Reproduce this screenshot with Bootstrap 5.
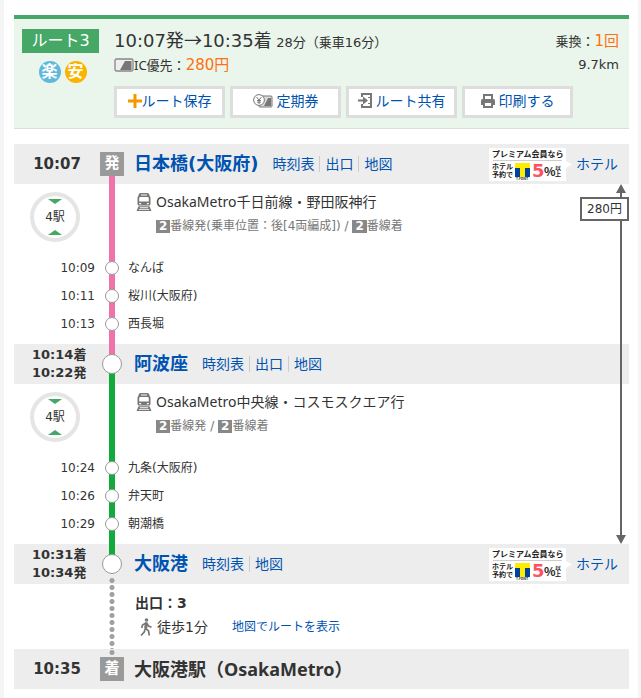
<!DOCTYPE html>
<html lang="ja">
<head>
<meta charset="utf-8">
<meta name="viewport" content="width=device-width, initial-scale=1">
<title>ルート3</title>
<link href="https://cdn.jsdelivr.net/npm/bootstrap@5.3.0/dist/css/bootstrap.min.css" rel="stylesheet">
<style>
body{background:#f5f5f5;color:#333;font-family:"DejaVu Sans","Noto Sans CJK JP",sans-serif;font-size:14px;line-height:20px}
a{color:#0053b0;text-decoration:none}
a:hover{text-decoration:underline}
svg{display:block;flex:none}
.page-sheet{background:#fff;margin:0 3px 0 4px;padding:15px 9px 9px 10px}
.alpha{font-family:"Noto Sans","Noto Sans CJK JP",sans-serif}
.cjk{font-family:"Noto Sans CJK JP",sans-serif}
.fs-12{font-size:12px}.fs-13{font-size:13px}.fs-15{font-size:15px}.fs-18{font-size:18px}
.accent{color:#ff7010}
.route-head{background:#eaf5eb;border-top:4px solid #45a866;border-bottom:1px solid #ddd;padding:10px 10px 10px 8px;margin-bottom:15px}
.route-side{width:77px;margin-right:15px}
.route-no{background:#45a866;color:#fff;font-size:16px;line-height:24px;font-weight:400;text-align:center;margin:0 0 8px}
.trait{width:22px;height:22px;border-radius:50%;color:#fff;font-weight:700;font-size:16px;line-height:21px;text-align:center}
.trait-easy{background:#5fb9dd}.trait-cheap{background:#fab400}
.fare-row{padding-top:2px}
.tool-list{gap:5px;margin-top:11px}
.tool-btn{width:111px;height:32px;padding:0 0 3px;border:3px solid #ddd;border-radius:0;background:#fff;color:#0053b0;font-size:14px;line-height:20px}
.tool-btn:hover{background:#f8f8f8;border-color:#ccc}
.stop-row{background:#ededed;height:40px}
.time-col{width:86px;flex:none}
.rail-col{width:24px;flex:none;align-self:stretch}
.time-main{font-size:15px;font-weight:700}
.time-pair{font-size:13px;font-weight:700;line-height:18px;padding-left:18px}
.stop-name{font-size:18px;line-height:26px;font-weight:700;margin:0 14px 0 10px}
.stop-links a+a{border-left:1px solid #ccc;margin-left:5px;padding-left:5px}
.hotel-link{gap:3px;margin-right:11px}
.end-mark{width:24px;height:24px;background:#999;color:#fff;font-size:15px;font-weight:700;line-height:23px;text-align:center}
.big-dot{width:20px;height:20px;border:1px solid #999;border-radius:50%;background:#fff}
.small-dot{width:14px;height:14px;border:1px solid #999;border-radius:50%;background:#fff}
.rail-start{background:linear-gradient(#ee73aa,#ee73aa) center bottom/6px 50% no-repeat}
.rail-change{background:linear-gradient(#ee73aa,#ee73aa) center top/6px 50% no-repeat,linear-gradient(#13aa3d,#13aa3d) center bottom/6px 50% no-repeat}
.rail-walk{background:linear-gradient(#13aa3d,#13aa3d) center top/6px 50% no-repeat,radial-gradient(circle,#a0a0a0 2px,transparent 3px) center bottom/6px 7px no-repeat}
.rail-arrive{background:radial-gradient(circle,#a0a0a0 2px,transparent 3px) center top/6px 7px no-repeat}
.leg-pink,.leg-green{padding-bottom:6px}
.leg-pink{background:linear-gradient(#ee73aa,#ee73aa) 95px 0/6px 100% no-repeat}
.leg-green{background:linear-gradient(#13aa3d,#13aa3d) 95px 0/6px 100% no-repeat}
.leg-walk{background:radial-gradient(circle,#a0a0a0 2px,transparent 3px) 95px 0/6px 7px repeat-y}
.leg-info{height:70px}
.count-btn{width:50px;height:50px;border:4px solid #e5e5e5;border-radius:50%;background:#fff;padding:0;color:#333;font-size:12px;line-height:18px;margin:8px 0 0 16px}
.track-line{color:#777;font-size:12px;line-height:20px;padding-left:20px}
.track-no{background:#888;color:#fff;font-weight:700;padding:0 3px;line-height:13px;display:inline-block}
.mid-stop{height:28px;font-size:12px}
.mid-time{padding-right:5px}
.fare-span{top:0;bottom:0;right:0;width:49px;pointer-events:none}
.fare-line{width:2px;background:#666;margin-right:7px}
.fare-tip{margin-right:3px}
.fare-box{border:2px solid #666;background:#fff;font-size:12px;line-height:20px;text-align:center}
.walk-leg{height:65px;padding:9px 0 0 121px}
</style>
<script src="https://cdn.jsdelivr.net/npm/bootstrap@5.3.0/dist/js/bootstrap.bundle.min.js"></script>
</head>
<body>
<svg width="0" height="0" class="position-absolute" aria-hidden="true">
<defs>
<symbol id="train" viewBox="0 0 16 18"><path fill="#777" fill-rule="evenodd" d="M5 0h6q2.500 0 2.500 2.500l1 2V11q0 1.500-1.500 1.500H3Q1.500 12.500 1.500 11V4.500l1-2Q2.500 0 5 0zM5 1.500v1h6v-1zM4 4l-.8 1v3.500h9.600V5L12 4zM3.200 10v1.200h2V10zm7.600 0v1.200h2V10z"/><path fill="#777" fill-rule="evenodd" d="M2.500 13.300h11L15.500 18h-15zM4 14.300l-.3.900h8.600l-.3-.9zM3 16.200l-.3.800h10.600l-.3-.8z"/></symbol>
<symbol id="bonus" viewBox="0 0 84 33"><path fill="#fff" d="M0 0h77v13l6 3.500-6 3.500v13H0z"/><path stroke="#ccc" d="M4 12.500h69"/><path fill="#ffed00" d="M26 15h15v5H26z"/><path fill="#ffed00" d="M31 20h5v9h-5z"/><path fill="#00439c" d="M26 20h5v9h-5zM36 20h5v9h-5z"/><g font-weight="700" fill="#222" font-family="'Noto Sans CJK JP',sans-serif"><text x="3" y="9" font-size="8">プレミアム会員なら</text><text x="3" y="21" font-size="7">ホテル</text><text x="3" y="29" font-size="7">予約で</text><text x="27" y="32" font-size="3">T-POINT</text><text x="43" y="29" font-size="18" fill="#ff5260" font-family="'DejaVu Sans',sans-serif">5</text><text x="55" y="28" font-size="12">%</text><text x="66" y="22" font-size="6">以</text><text x="66" y="28" font-size="6">上</text></g></symbol>
</defs>
</svg>
<main class="page-sheet">
<header class="route-head d-flex">
<div class="route-side flex-shrink-0">
<h1 class="route-no">ルート3</h1>
<div class="d-flex justify-content-center gap-1 ps-1"><span class="trait trait-easy">楽</span><span class="trait trait-cheap">安</span></div>
</div>
<div class="flex-grow-1">
<div class="d-flex justify-content-between align-items-center">
<div class="text-nowrap"><span class="fs-18">10:07発<span class="cjk">→</span>10:35着</span> <span class="fs-13">28分（乗車16分）</span></div>
<div class="fs-13 text-nowrap">乗換：<span class="accent fs-15">1回</span></div>
</div>
<div class="d-flex justify-content-between align-items-center fare-row">
<div class="d-flex align-items-center fs-13 text-nowrap"><svg width="20" height="14" viewBox="0 0 20 14"><rect x="1" y="1" width="18" height="12" rx="1.500" fill="#eee" stroke="#888" stroke-width="1.300"/><path fill="#777" d="M6 12 11 3h6.500v9z"/></svg><span class="alpha">IC優先：</span><span class="accent fs-15">280円</span></div>
<div class="fs-13">9.7km</div>
</div>
<div class="d-flex tool-list">
<button type="button" class="tool-btn btn d-flex align-items-center justify-content-center"><svg width="14" height="14" viewBox="0 0 14 14"><path fill="#f39800" d="M5.500 0h3v5.500H14v3H8.500V14h-3V8.500H0v-3h5.500z"/></svg>ルート保存</button>
<button type="button" class="tool-btn btn d-flex align-items-center justify-content-center"><svg class="me-1" width="20" height="14" viewBox="0 0 20 14"><rect x="6" y="2" width="13" height="11" rx="1" fill="#ddd" stroke="#777"/><path fill="#777" d="m11 12 4-8h3v8z"/><circle cx="6" cy="6" r="5.400" fill="#fff" stroke="#777"/><path fill="none" stroke="#777" d="m3.500 3 2.500 3 2.500-3M6 6v4M4 6.500h4M4 8.200h4"/></svg>定期券</button>
<button type="button" class="tool-btn btn d-flex align-items-center justify-content-center"><svg class="me-1" width="14" height="15" viewBox="0 0 14 15"><path fill="none" stroke="#777" stroke-width="2" d="M4 4V1h9v13H4v-3"/><path fill="#777" d="M0 6.500h5V3.500l5 4-5 4v-3H0zM10 4h2v1h-2zM10 10h2v1h-2z"/></svg>ルート共有</button>
<button type="button" class="tool-btn btn d-flex align-items-center justify-content-center"><svg class="me-1" width="14" height="14" viewBox="0 0 14 14"><path fill="none" stroke="#777" stroke-width="2" d="M3 6V1h8v5"/><path fill="#777" fill-rule="evenodd" d="M1.500 5h11Q14 5 14 6.500V11h-2v3H2v-3H0V6.500Q0 5 1.500 5zM4 9v3h6V9z"/></svg>印刷する</button>
</div>
</div>
</header>

<section>
<div class="stop-row d-flex align-items-center">
<time class="time-col time-main text-center">10:07</time>
<div class="rail-col rail-start d-flex align-items-center"><span class="end-mark">発</span></div>
<h2 class="stop-name text-nowrap"><a href="#">日本橋(大阪府)</a></h2>
<nav class="stop-links text-nowrap"><a href="#">時刻表</a><a href="#">出口</a><a href="#">地図</a></nav>
<a href="#" class="hotel-link ms-auto d-flex align-items-center text-nowrap"><svg width="84" height="33" role="img" aria-label="プレミアム会員ならホテル予約で5%以上"><use href="#bonus"/></svg>ホテル</a>
</div>
<div class="position-relative">
<div class="leg-pink">
<div class="leg-info d-flex">
<div class="time-col"><button type="button" class="count-btn d-flex flex-column align-items-center justify-content-center"><svg width="14" height="5"><path fill="#45a866" d="M0 0h14L7 5z"/></svg><span class="my-1">4駅</span><svg width="14" height="5"><path fill="#45a866" d="M0 5h14L7 0z"/></svg></button></div>
<div class="rail-col"></div>
<div class="ps-2 ms-1 pt-2">
<div class="d-flex align-items-center"><svg class="me-1" width="16" height="18"><use href="#train"/></svg><span class="alpha">OsakaMetro千日前線・野田阪神行</span></div>
<div class="track-line mt-1"><span class="track-no">2</span>番線発(乗車位置：後[4両編成]) / <span class="track-no">2</span>番線着</div>
</div>
</div>
<div class="mid-stop d-flex align-items-center"><time class="time-col mid-time text-end">10:09</time><span class="rail-col d-flex align-items-center justify-content-center"><i class="small-dot"></i></span><span class="ps-1">なんば</span></div>
<div class="mid-stop d-flex align-items-center"><time class="time-col mid-time text-end">10:11</time><span class="rail-col d-flex align-items-center justify-content-center"><i class="small-dot"></i></span><span class="ps-1">桜川(大阪府)</span></div>
<div class="mid-stop d-flex align-items-center"><time class="time-col mid-time text-end">10:13</time><span class="rail-col d-flex align-items-center justify-content-center"><i class="small-dot"></i></span><span class="ps-1">西長堀</span></div>
</div>
<div class="stop-row d-flex align-items-center">
<div class="time-col time-pair text-nowrap"><time>10:14着</time><br><time>10:22発</time></div>
<div class="rail-col rail-change d-flex align-items-center justify-content-center"><i class="big-dot"></i></div>
<h2 class="stop-name text-nowrap"><a href="#">阿波座</a></h2>
<nav class="stop-links text-nowrap"><a href="#">時刻表</a><a href="#">出口</a><a href="#">地図</a></nav>
</div>
<div class="leg-green">
<div class="leg-info d-flex">
<div class="time-col"><button type="button" class="count-btn d-flex flex-column align-items-center justify-content-center"><svg width="14" height="5"><path fill="#45a866" d="M0 0h14L7 5z"/></svg><span class="my-1">4駅</span><svg width="14" height="5"><path fill="#45a866" d="M0 5h14L7 0z"/></svg></button></div>
<div class="rail-col"></div>
<div class="ps-2 ms-1 pt-2">
<div class="d-flex align-items-center"><svg class="me-1" width="16" height="18"><use href="#train"/></svg><span class="alpha">OsakaMetro中央線・コスモスクエア行</span></div>
<div class="track-line mt-1"><span class="track-no">2</span>番線発 / <span class="track-no">2</span>番線着</div>
</div>
</div>
<div class="mid-stop d-flex align-items-center"><time class="time-col mid-time text-end">10:24</time><span class="rail-col d-flex align-items-center justify-content-center"><i class="small-dot"></i></span><span class="ps-1">九条(大阪府)</span></div>
<div class="mid-stop d-flex align-items-center"><time class="time-col mid-time text-end">10:26</time><span class="rail-col d-flex align-items-center justify-content-center"><i class="small-dot"></i></span><span class="ps-1">弁天町</span></div>
<div class="mid-stop d-flex align-items-center"><time class="time-col mid-time text-end">10:29</time><span class="rail-col d-flex align-items-center justify-content-center"><i class="small-dot"></i></span><span class="ps-1">朝潮橋</span></div>
</div>
<div class="fare-span position-absolute d-flex flex-column">
<svg class="fare-tip align-self-end" width="10" height="9"><path fill="#666" d="M5 0l5 9H0z"/></svg>
<span class="fare-line align-self-end pt-1"></span>
<span class="fare-box">280円</span>
<span class="fare-line align-self-end flex-grow-1"></span>
<svg class="fare-tip align-self-end" width="10" height="9"><path fill="#666" d="M5 9l5-9H0z"/></svg>
</div>
</div>
<div class="stop-row d-flex align-items-center">
<div class="time-col time-pair text-nowrap"><time>10:31着</time><br><time>10:34発</time></div>
<div class="rail-col rail-walk d-flex align-items-center justify-content-center"><i class="big-dot"></i></div>
<h2 class="stop-name text-nowrap"><a href="#">大阪港</a></h2>
<nav class="stop-links text-nowrap"><a href="#">時刻表</a><a href="#">地図</a></nav>
<a href="#" class="hotel-link ms-auto d-flex align-items-center text-nowrap"><svg width="84" height="33" role="img" aria-label="プレミアム会員ならホテル予約で5%以上"><use href="#bonus"/></svg>ホテル</a>
</div>
<div class="leg-walk walk-leg">
<div class="fw-bold">出口：3</div>
<div class="d-flex align-items-center pt-1"><svg class="ms-1 me-1" width="14" height="18" viewBox="0 0 14 18"><circle cx="7.500" cy="2" r="1.800" fill="#777"/><path fill="none" stroke="#777" stroke-width="1.700" d="M7.500 4.500 6.500 10l3 3 .8 4.500M6.500 10l-1.300 4L2 17.500M7 5 3.500 7l-.8 3M8 5.500 9.500 8l3 1.200"/><path stroke="#777" stroke-width="3" d="M7.500 4.500 6.700 10"/></svg><span>徒歩1分</span><a href="#" class="fs-12 ms-4">地図でルートを表示</a></div>
</div>
<div class="stop-row d-flex align-items-center">
<time class="time-col time-main text-center">10:35</time>
<div class="rail-col rail-arrive d-flex align-items-center"><span class="end-mark">着</span></div>
<h2 class="stop-name alpha text-nowrap">大阪港駅（OsakaMetro）</h2>
</div>
</section>
</main>
</body>
</html>
